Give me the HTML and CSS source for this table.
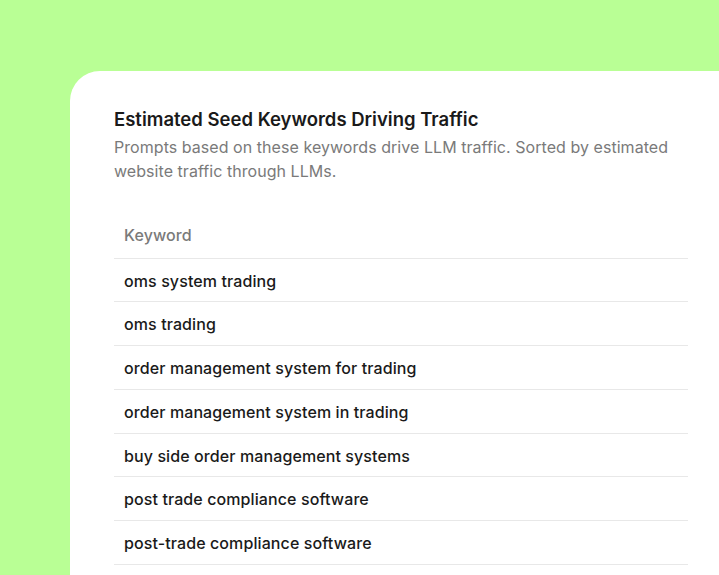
FILE: index.html
```html
<!DOCTYPE html>
<html lang="en">
<head>
    <meta charset="UTF-8">
    <meta name="viewport" content="width=device-width, initial-scale=1.0">
    <title>Seed Keywords</title>
    <link rel="stylesheet" href="styles.css">
</head>
<body>

    <div class="card">
        <h2 class="title">Estimated Seed Keywords Driving Traffic</h2>
        <p class="subtitle">Prompts based on these keywords drive LLM traffic. Sorted by estimated website traffic through LLMs.</p>

        <table class="keywords">
            <thead>
                <tr>
                    <th>Keyword</th>
                </tr>
            </thead>
            <tbody>
                <tr><td>oms system trading</td></tr>
                <tr><td>oms trading</td></tr>
                <tr><td>order management system for trading</td></tr>
                <tr><td>order management system in trading</td></tr>
                <tr><td>buy side order management systems</td></tr>
                <tr><td>post trade compliance software</td></tr>
                <tr><td>post-trade compliance software</td></tr>
            </tbody>
        </table>
    </div>

</body>
</html>
```

FILE: styles.css
```css
body {
    margin: 0;
    background-color: #b9ff95;
    font-family: Inter, "Noto Sans", sans-serif;
    overflow: hidden;
    height: 575px;
}
.card {
    box-sizing: border-box;
    margin: 71px 0 0 70px;
    padding: 36px 31px 0 44px;
    background-color: #ffffff;
    border-top-left-radius: 30px;
    height: 504px;
}
.title {
    margin: 0;
    font-size: 18.5px;
    line-height: 25px;
    font-weight: 600;
    color: #1a1a1a;
}
.subtitle {
    margin: 4px 0 0;
    font-size: 16px;
    line-height: 23.5px;
    color: #7a7a7a;
    letter-spacing: 0.05px;
}
.keywords {
    width: 100%;
    border-collapse: collapse;
    margin-top: 31px;
}
.keywords th,
.keywords td {
    text-align: left;
    padding: 10px 10px;
    line-height: 22.7px;
    font-size: 16px;
    font-weight: 500;
    letter-spacing: 0.1px;
    border-bottom: 1px solid #e8e8e8;
}
.keywords th {
    padding-bottom: 11px;
    color: #7a7a7a;
}
.keywords td {
    padding-top: 11px;
    padding-bottom: 9px;
    color: #1a1a1a;
}
```
